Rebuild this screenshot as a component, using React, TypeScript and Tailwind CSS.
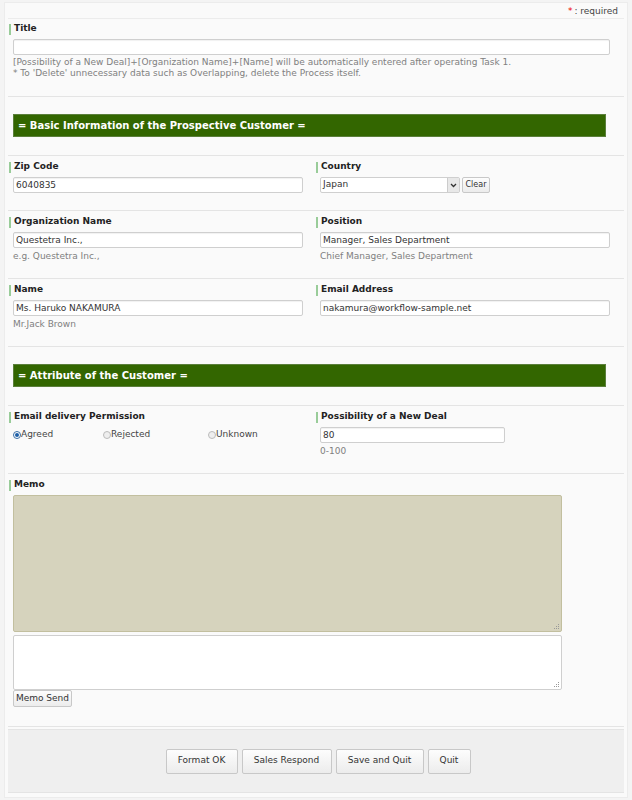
import React from "react";

const font = { fontFamily: '"DejaVu Sans", Verdana, sans-serif' };

function Label({ children }: { children: React.ReactNode }) {
  return (
    <div className="flex items-center h-[12px] text-[9px] font-bold text-[#222]">
      <span className="w-[2px] h-[11px] bg-[#99cc99] mr-[3px]" />
      {children}
    </div>
  );
}

function TextBox({ value = "", className = "" }: { value?: string; className?: string }) {
  return (
    <div
      className={
        "h-[16px] bg-white border border-[#cfcfcf] rounded-[2px] shadow-[inset_0_1px_1px_rgba(0,0,0,0.06)] px-[2px] text-[9px] leading-[14px] text-[#333] " +
        className
      }
    >
      {value}
    </div>
  );
}

function Hint({ children }: { children: React.ReactNode }) {
  return <div className="text-[9px] leading-[11px] text-[#808080]">{children}</div>;
}

function Header({ children }: { children: React.ReactNode }) {
  return (
    <div className="h-[59px] border-b border-[#e4e4e4] pt-[17px] pl-[5px]">
      <div className="w-[593px] h-[23px] bg-[#336600] border border-[#5b7f3b] flex items-center pl-[4px] text-white font-bold text-[10px]">
        {children}
      </div>
    </div>
  );
}

function Field({ label, children }: { label: string; children: React.ReactNode }) {
  return (
    <div className="w-[307px] pl-[1px] pt-[5px]">
      <Label>{label}</Label>
      <div className="pl-[4px] mt-[4px] flex flex-col gap-[3px]">{children}</div>
    </div>
  );
}

function Radio({ label, checked = false }: { label: string; checked?: boolean }) {
  return (
    <div className="flex items-center text-[9px] text-[#444]">
      <span
        className={
          "w-[8px] h-[8px] rounded-full border flex items-center justify-center " +
          (checked ? "border-[#3a6ea5] bg-white" : "border-[#bbb] bg-[#eee]")
        }
      >
        {checked && <span className="w-[4px] h-[4px] rounded-full bg-[#1d5fa8]" />}
      </span>
      {label}
    </div>
  );
}

function Btn({ children, className = "" }: { children: React.ReactNode; className?: string }) {
  return (
    <div
      className={
        "flex items-center justify-center border border-[#c8c8c8] rounded-[2px] bg-gradient-to-b from-[#fdfdfd] to-[#ececec] text-[#333] " +
        className
      }
    >
      {children}
    </div>
  );
}

function Grip() {
  return (
    <svg width="7" height="7" viewBox="0 0 7 7" className="absolute right-[1px] bottom-[1px]">
      <rect x="5" y="1" width="1" height="1" fill="#999" />
      <rect x="3" y="3" width="1" height="1" fill="#999" />
      <rect x="5" y="3" width="1" height="1" fill="#999" />
      <rect x="1" y="5" width="1" height="1" fill="#999" />
      <rect x="3" y="5" width="1" height="1" fill="#999" />
      <rect x="5" y="5" width="1" height="1" fill="#999" />
    </svg>
  );
}

export default function App() {
  return (
    <div className="w-[632px] h-[800px] bg-[#f4f4f4] pt-[2px] px-[4px]" style={font}>
      <div className="bg-[#fafafa] border border-[#ececec] h-[796px] pl-[3px] pr-[3px] flex flex-col">
        {/* required */}
        <div className="h-[16px] border-b border-[#ececec] flex justify-end items-center pr-[6px] pt-[3px] text-[9px] text-[#444]">
          <span className="text-[#e00] mr-[2px]">*</span>: required
        </div>

        {/* title */}
        <div className="h-[78px] border-b border-[#e4e4e4] pt-[4px] pl-[1px]">
          <Label>Title</Label>
          <div className="pl-[4px] pr-[14px] mt-[4px]">
            <TextBox />
            <div className="mt-[2px]">
              <Hint>[Possibility of a New Deal]+[Organization Name]+[Name] will be automatically entered after operating Task 1.</Hint>
              <Hint>* To 'Delete' unnecessary data such as Overlapping, delete the Process itself.</Hint>
            </div>
          </div>
        </div>

        <Header>= Basic Information of the Prospective Customer =</Header>

        <div className="h-[55px] border-b border-[#e4e4e4] flex">
          <Field label="Zip Code">
            <TextBox value="6040835" className="w-[290px]" />
          </Field>
          <Field label="Country">
            <div className="flex gap-[2px]">
              <div className="w-[140px] h-[16px] bg-white border border-[#cfcfcf] rounded-[2px] flex items-center justify-between text-[9px] text-[#333]">
                <span className="pl-[2px]">Japan</span>
                <span className="w-[12px] h-[14px] bg-[#e8e8e8] border-l border-[#ccc] flex items-center justify-center">
                  <svg width="7" height="5" viewBox="0 0 7 5">
                    <path d="M1 1l2.5 2.5L6 1" stroke="#333" strokeWidth="1.3" fill="none" />
                  </svg>
                </span>
              </div>
              <Btn className="w-[28px] h-[16px] text-[8px]">Clear</Btn>
            </div>
          </Field>
        </div>

        <div className="h-[68px] border-b border-[#e4e4e4] flex">
          <Field label="Organization Name">
            <TextBox value="Questetra Inc.," className="w-[290px]" />
            <Hint>e.g. Questetra Inc.,</Hint>
          </Field>
          <Field label="Position">
            <TextBox value="Manager, Sales Department" className="w-[290px]" />
            <Hint>Chief Manager, Sales Department</Hint>
          </Field>
        </div>

        <div className="h-[68px] border-b border-[#e4e4e4] flex">
          <Field label="Name">
            <TextBox value="Ms. Haruko NAKAMURA" className="w-[290px]" />
            <Hint>Mr.Jack Brown</Hint>
          </Field>
          <Field label="Email Address">
            <TextBox value="nakamura@workflow-sample.net" className="w-[290px]" />
          </Field>
        </div>

        <Header>= Attribute of the Customer =</Header>

        <div className="h-[68px] border-b border-[#e4e4e4] flex">
          <Field label="Email delivery Permission">
            <div className="flex mt-[1px]">
              <div className="w-[90px]">
                <Radio label="Agreed" checked />
              </div>
              <div className="w-[105px]">
                <Radio label="Rejected" />
              </div>
              <Radio label="Unknown" />
            </div>
          </Field>
          <Field label="Possibility of a New Deal">
            <TextBox value="80" className="w-[185px]" />
            <Hint>0-100</Hint>
          </Field>
        </div>

        <div className="h-[253px] border-b border-[#e4e4e4] pt-[5px] pl-[1px]">
          <Label>Memo</Label>
          <div className="pl-[4px] mt-[4px] w-[553px]">
            <div className="relative h-[137px] bg-[#d6d3bd] border border-[#c2bf9f] rounded-[2px]">
              <Grip />
            </div>
            <div className="relative mt-[3px] h-[55px] bg-white border border-[#cfcfcf] rounded-[2px]">
              <Grip />
            </div>
            <Btn className="w-[59px] h-[17px] text-[9px]">Memo Send</Btn>
          </div>
        </div>

        {/* footer */}
        <div className="mt-[2px] h-[64px] bg-[#efefef] border-y border-[#e4e4e4] flex justify-center items-center gap-[4px] pl-[4px]">
          <Btn className="w-[72px] h-[25px] text-[9px]">Format OK</Btn>
          <Btn className="w-[90px] h-[25px] text-[9px]">Sales Respond</Btn>
          <Btn className="w-[88px] h-[25px] text-[9px]">Save and Quit</Btn>
          <Btn className="w-[43px] h-[25px] text-[9px]">Quit</Btn>
        </div>
      </div>
    </div>
  );
}
